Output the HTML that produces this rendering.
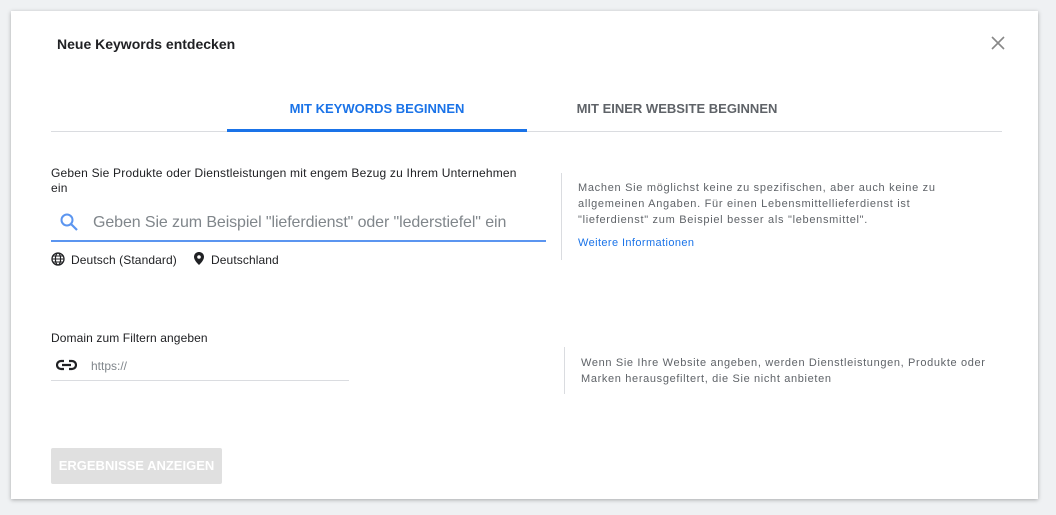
<!DOCTYPE html>
<html><head><style>
body{margin:0;width:1056px;height:515px;background:#eff1f3;font-family:"Liberation Sans",Arial,sans-serif;position:relative;overflow:hidden}
.d{position:absolute;left:11px;top:11px;width:1027px;height:488px;background:#fff;box-shadow:0 1px 4px rgba(0,0,0,.3)}
.a{position:absolute;white-space:nowrap}
</style></head><body>
<div class="d"></div>
<div class="a" style="left:57px;top:36px;font-size:14px;font-weight:bold;color:#202124">Neue Keywords entdecken</div>
<svg class="a" style="left:990px;top:35px" width="16" height="16"><path d="M2 2L14 14M14 2L2 14" stroke="#888" stroke-width="1.6"/></svg>
<div class="a" style="left:51px;top:131px;width:951px;height:1px;background:#dadce0"></div>
<div class="a" style="left:227px;top:129px;width:300px;height:3px;background:#1a73e8"></div>
<div class="a" style="left:227px;width:300px;top:101px;text-align:center;font-size:13px;font-weight:bold;color:#1a73e8">MIT KEYWORDS BEGINNEN</div>
<div class="a" style="left:527px;width:300px;top:101px;text-align:center;font-size:13px;font-weight:bold;color:#5f6368">MIT EINER WEBSITE BEGINNEN</div>
<div class="a" style="left:51px;top:166px;font-size:12px;line-height:15px;letter-spacing:0.2px;color:#202124;white-space:normal;width:482px">Geben Sie Produkte oder Dienstleistungen mit engem Bezug zu Ihrem Unternehmen ein</div>
<svg class="a" style="left:59px;top:212px" width="20" height="20"><circle cx="8" cy="8" r="5.5" fill="none" stroke="#5b95f0" stroke-width="2"/><path d="M12 12L18 18" stroke="#5b95f0" stroke-width="2.2"/></svg>
<div class="a" style="left:93px;top:214px;font-size:16px;color:#80868b;letter-spacing:-0.1px">Geben Sie zum Beispiel "lieferdienst" oder "lederstiefel" ein</div>
<div class="a" style="left:51px;top:240px;width:495px;height:2px;background:#5b95f0"></div>
<svg class="a" style="left:51px;top:252px" width="14" height="14"><circle cx="7" cy="7" r="6" fill="none" stroke="#202124" stroke-width="1.3"/><ellipse cx="7" cy="7" rx="2.6" ry="6" fill="none" stroke="#202124" stroke-width="1.2"/><path d="M1 7H13M2 4H12M2 10H12" stroke="#202124" stroke-width="1.1"/></svg>
<div class="a" style="left:71px;top:253px;font-size:12px;color:#202124;letter-spacing:0.1px">Deutsch (Standard)</div>
<svg class="a" style="left:193px;top:251px" width="12" height="15"><path d="M6 1C3 1 1 3.2 1 6c0 3.5 5 8 5 8s5-4.5 5-8c0-2.8-2-5-5-5z" fill="#202124"/><circle cx="6" cy="6" r="1.8" fill="#fff"/></svg>
<div class="a" style="left:211px;top:253px;font-size:12px;color:#202124;letter-spacing:0.1px">Deutschland</div>
<div class="a" style="left:561px;top:173px;width:1px;height:87px;background:#dadce0"></div>
<div class="a" style="left:578px;top:180px;font-size:11px;line-height:16px;letter-spacing:0.7px;color:#5f6368;white-space:normal;width:368px">Machen Sie möglichst keine zu spezifischen, aber auch keine zu allgemeinen Angaben. Für einen Lebensmittellieferdienst ist "lieferdienst" zum Beispiel besser als "lebensmittel".</div>
<div class="a" style="left:578px;top:237px;font-size:11px;color:#1a73e8;letter-spacing:0.4px">Weitere Informationen</div>
<div class="a" style="left:51px;top:331px;font-size:12px;color:#202124;letter-spacing:0.1px">Domain zum Filtern angeben</div>
<svg class="a" style="left:56px;top:359px" width="21" height="12"><path d="M8 2H5a4 4 0 0 0 0 8h3M13 2h3a4 4 0 0 1 0 8h-3M6 6h9" fill="none" stroke="#202124" stroke-width="2.2"/></svg>
<div class="a" style="left:91px;top:359px;font-size:12px;color:#80868b">https://</div>
<div class="a" style="left:51px;top:380px;width:298px;height:1px;background:#dadce0"></div>
<div class="a" style="left:564px;top:347px;width:1px;height:47px;background:#dadce0"></div>
<div class="a" style="left:581px;top:355px;font-size:11px;line-height:16px;letter-spacing:0.65px;color:#5f6368;white-space:normal;width:412px">Wenn Sie Ihre Website angeben, werden Dienstleistungen, Produkte oder Marken herausgefiltert, die Sie nicht anbieten</div>
<div class="a" style="left:51px;top:448px;width:171px;height:36px;background:#e0e0e0;border-radius:2px;color:#fff;font-size:13px;font-weight:bold;text-align:center;line-height:36px">ERGEBNISSE ANZEIGEN</div>
</body></html>
